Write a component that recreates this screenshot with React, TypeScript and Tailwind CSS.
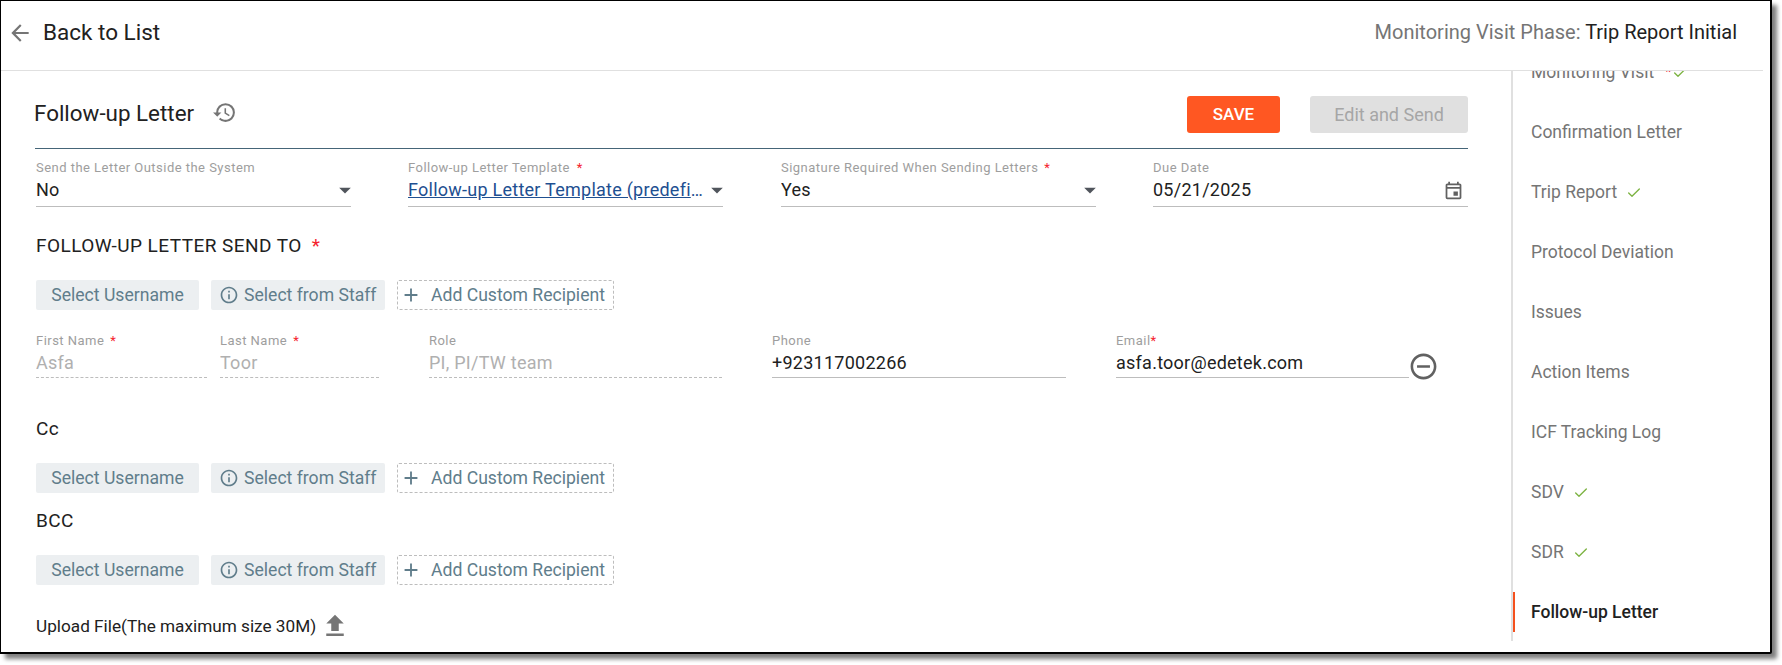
import { MdArrowBack, MdHistory, MdArrowDropDown, MdOutlineEvent, MdInfoOutline, MdAdd, MdRemoveCircleOutline, MdFileUpload } from 'react-icons/md';
import { Check } from 'lucide-react';

function Field({ label, value, required, width = 'w-[315px]', dashed, muted, link, star, arrow, calendar, compact }: {
  label: string;
  value: string;
  required?: boolean;
  width?: string;
  dashed?: boolean;
  muted?: boolean;
  link?: boolean;
  star?: string;
  arrow?: boolean;
  calendar?: boolean;
  compact?: boolean;
}) {
  return (
    <div className={`${width} shrink-0`}>
      <div className="h-[18px] text-[13px] leading-[18px] tracking-[0.47px] text-[#9e9e9e] whitespace-nowrap">
        {label}
        {required && <span className={`text-[#f5222d] ${star ?? 'ml-[6px]'}`}>*</span>}
      </div>
      <div className={`flex items-center justify-between border-b ${compact ? 'h-[28px] pb-[2px]' : 'h-[30px] pb-[3px]'} ${dashed ? 'border-dashed' : ''} border-[#bdbdbd]`}>
        <span className={`text-[18px] leading-[26px] tracking-[0.25px] truncate ${muted ? 'text-[#b0b0b0]' : link ? 'text-[#1e4f91] underline' : 'text-[#212121]'}`}>
          {value}
        </span>
        {arrow && <MdArrowDropDown className="shrink-0 text-[#50555c] -mr-[8px] -ml-[6px] text-[28px]" />}
        {calendar && <MdOutlineEvent className="shrink-0 text-[#616161] mr-[4px] text-[21px]" />}
      </div>
    </div>
  );
}

function RecipientButtons() {
  return (
    <div className="flex gap-3 text-[17.6px] text-[#607d8b]">
      <button className="w-[163px] h-[30px] bg-[#eceff1] rounded-[2px] flex items-center justify-center">Select Username</button>
      <button className="w-[174px] h-[30px] bg-[#eceff1] rounded-[2px] flex items-center pl-[8px] gap-[5px]">
        <MdInfoOutline className="text-[20px]" />
        Select from Staff
      </button>
      <button className="w-[217px] h-[30px] border border-dashed border-[#bdbdbd] rounded-[2px] flex items-center pl-[2px] gap-[9px]">
        <MdAdd className="text-[22px]" />
        Add Custom Recipient
      </button>
    </div>
  );
}

const navItems = [
  { name: 'Monitoring Visit', check: true, star: true },
  { name: 'Confirmation Letter' },
  { name: 'Trip Report', check: true },
  { name: 'Protocol Deviation' },
  { name: 'Issues' },
  { name: 'Action Items' },
  { name: 'ICF Tracking Log' },
  { name: 'SDV', check: true },
  { name: 'SDR', check: true },
  { name: 'Follow-up Letter', active: true },
];

export default function App() {
  return (
    <div className="w-[1782px] h-[665px] bg-white overflow-hidden font-['Roboto',sans-serif]">
      <div className="w-[1772px] h-[654px] flex flex-col border-t border-l border-r-2 border-b-2 border-black bg-white shadow-[5px_5px_4px_#808080] rounded-br-[2px] overflow-hidden pr-[7px]">
        <header className="h-[70px] shrink-0 flex items-center justify-between border-b border-[#e0e0e0] pl-[6px] pr-[26px] pb-[5px]">
          <div className="flex items-center gap-[10px]">
            <MdArrowBack className="text-[26px] text-[#757575]" />
            <span className="text-[22.5px] text-[#212121]">Back to List</span>
          </div>
          <div className="text-[20px] text-[#757575] mb-[2px]">
            Monitoring Visit Phase: <span className="text-[#212121]">Trip Report Initial</span>
          </div>
        </header>

        <div className="flex flex-1 min-h-0">
          <main className="w-[1510px] shrink-0 pl-[34px] pr-[43px]">
            <div className="h-[78px] flex items-start justify-between border-b border-[#456578] pt-[25px]">
              <div className="flex items-center gap-[18px] pt-[2px] -ml-[1px]">
                <h1 className="text-[22.4px] leading-[30px] text-[#212121]">Follow-up Letter</h1>
                <MdHistory className="text-[25px] text-[#757575] -mt-[2px]" />
              </div>
              <div className="flex gap-[30px]">
                <button className="w-[93px] h-[37px] bg-[#ff5722] rounded-[3px] text-white text-[17px] font-medium">SAVE</button>
                <button className="w-[158px] h-[37px] bg-[#e0e0e0] rounded-[3px] text-[#a6a6a6] text-[18px]">Edit and Send</button>
              </div>
            </div>

            <div className="mt-[10px] pl-[1px] flex gap-[57px]">
              <Field label="Send the Letter Outside the System" value="No" arrow />
              <Field label="Follow-up Letter Template" value="Follow-up Letter Template (predefined)" required star="ml-[7px]" link arrow />
              <Field label="Signature Required When Sending Letters" value="Yes" required width="w-[315px] ml-[1px]" arrow />
              <Field label="Due Date" value="05/21/2025" calendar />
            </div>

            <div className="pl-[1px]">
              <div className="mt-[27px] text-[19px] tracking-[0.45px] leading-[24px] text-[#212121]">
                FOLLOW-UP LETTER SEND TO<span className="text-[#f5222d] ml-[10px]">*</span>
              </div>
              <div className="mt-[22px]"><RecipientButtons /></div>

              <div className="mt-[22px] h-[46px] flex items-start">
                <Field label="First Name" value="Asfa" required width="w-[171px]" dashed muted compact />
                <div className="w-[13px] shrink-0" />
                <Field label="Last Name" value="Toor" required width="w-[159px]" dashed muted compact />
                <div className="w-[50px] shrink-0" />
                <Field label="Role" value="PI, PI/TW team" width="w-[293px]" dashed muted compact />
                <div className="w-[50px] shrink-0" />
                <Field label="Phone" value="+923117002266" width="w-[294px]" compact />
                <div className="w-[50px] shrink-0" />
                <Field label="Email" value="asfa.toor@edetek.com" required star="ml-0" width="w-[293px]" compact />
                <MdRemoveCircleOutline className="shrink-0 text-[#616161] text-[31px] mt-[19px] -ml-[1px]" />
              </div>

              <div className="mt-[39px] text-[19px] tracking-[0.4px] leading-[24px] text-[#212121]">Cc</div>
              <div className="mt-[22px]"><RecipientButtons /></div>
              <div className="mt-[16px] text-[19px] tracking-[0.4px] leading-[24px] text-[#212121]">BCC</div>
              <div className="mt-[22px]"><RecipientButtons /></div>
              <div className="mt-[26px] flex items-center gap-[4px] text-[17.2px] leading-[24px] text-[#212121]">
                Upload File(The maximum size 30M)
                <MdFileUpload className="text-[30px] text-[#757575]" />
              </div>
            </div>
          </main>

          <nav className="h-[570px] border-l-2 border-[#e0e0e0] overflow-hidden flex-1">
            <div className="-mt-[19px] flex flex-col gap-[20px]">
              {navItems.map((item) => (
                <div key={item.name} className={`h-10 flex items-center pl-[16px] pt-[1px] text-[17.5px] border-l-2 ${item.active ? 'border-[#f4511e] text-[#212121] font-medium' : 'border-transparent text-[#757575]'}`}>
                  {item.name}
                  {item.star && <span className="text-[#f5222d] ml-[11px] text-[14px]">*</span>}
                  {item.check && <Check className={`text-[#7cb342] ${item.star ? 'ml-[1px]' : 'ml-[9px]'}`} size={16} strokeWidth={2} />}
                </div>
              ))}
            </div>
          </nav>
        </div>
      </div>
    </div>
  );
}
